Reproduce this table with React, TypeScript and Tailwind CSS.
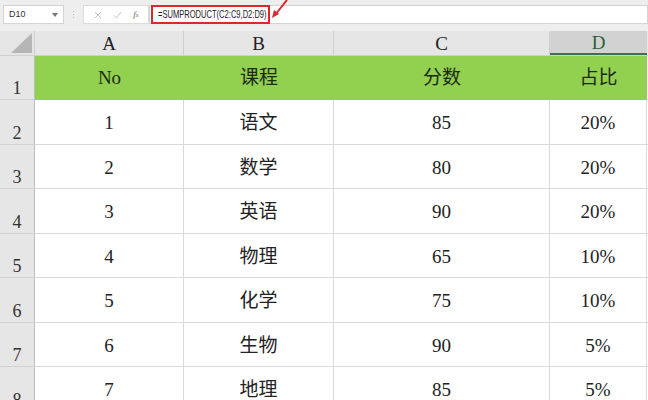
import React from "react";

const serif = { fontFamily: '"Liberation Serif", "Noto Sans CJK SC", serif' };
const sans = { fontFamily: '"Liberation Sans", Arial, sans-serif' };

const rows = [
  ["1", "语文", "85", "20%"],
  ["2", "数学", "80", "20%"],
  ["3", "英语", "90", "20%"],
  ["4", "物理", "65", "10%"],
  ["5", "化学", "75", "10%"],
  ["6", "生物", "90", "5%"],
  ["7", "地理", "85", "5%"],
];

const cols = "grid grid-cols-[35px_149px_150px_216px_97px_1fr]";

function RowHead({ n, h }: { n: string; h: string }) {
  return (
    <div
      className={`${h} bg-[#e6e6e6] border-r border-r-[#bdbdbd] border-b border-b-[#d2d2d2] flex items-end justify-center pb-[2px] text-[18px] leading-none text-[#333]`}
      style={serif}
    >
      {n}
    </div>
  );
}

export default function App() {
  return (
    <div className="w-[648px] h-[400px] overflow-hidden bg-white relative">
      {/* top formula bar */}
      <div className="h-[31px] bg-[#eeeeee] flex items-start pt-[5px] pl-[3px] gap-0">
        <div className="w-[61px] h-[19px] bg-white border border-[#d4d4d4] flex items-center justify-between px-[5px] text-[9px] text-[#333]" style={sans}>
          <span>D10</span>
          <svg width="6" height="4" viewBox="0 0 6 4"><path d="M0 0h6L3 4z" fill="#777" /></svg>
        </div>
        <div className="w-[19px] h-[19px] flex items-center justify-center">
          <div className="flex flex-col gap-[2px]">
            <div className="w-[1px] h-[1px] bg-[#bbb]" />
            <div className="w-[1px] h-[1px] bg-[#bbb]" />
            <div className="w-[1px] h-[1px] bg-[#bbb]" />
          </div>
        </div>
        <div className="w-[66px] h-[19px] bg-white border border-[#dcdcdc] flex items-center justify-around px-[4px]">
          <svg width="8" height="8" viewBox="0 0 8 8"><path d="M1 1l6 6M7 1L1 7" stroke="#c4c4c4" strokeWidth="1" /></svg>
          <svg width="9" height="8" viewBox="0 0 9 8"><path d="M1 4.5l2.5 2.5L8 1" stroke="#c4c4c4" strokeWidth="1" fill="none" /></svg>
          <span className="text-[9px] italic text-[#666]" style={{ fontFamily: '"Liberation Serif", serif' }}>f<span className="text-[6px]">x</span></span>
        </div>
        <div className="flex-1 h-[19px] bg-white border border-[#d4d4d4] relative">
          <div className="absolute left-[1px] top-[-1px] w-[119px] h-[19px] border-2 border-[#e0262b] flex items-center pl-[5px] overflow-hidden">
            <span className="inline-block whitespace-nowrap text-[10.5px] text-[#222] origin-left scale-x-[0.72]" style={sans}>
              =SUMPRODUCT(C2:C9,D2:D9)
            </span>
          </div>
        </div>
      </div>
      <svg className="absolute left-[271px] top-0" width="20" height="20" viewBox="0 0 20 20">
        <path d="M4 15L16 0" stroke="#e0262b" strokeWidth="2" fill="none" />
        <path d="M1 18L3 10L8 14Z" fill="#e0262b" />
      </svg>

      {/* column headers */}
      <div className={`${cols} h-[25px] bg-[#e6e6e6] border-b border-[#cfcfcf]`}>
        <div className="relative border-r border-[#cfcfcf]">
          <svg className="absolute right-[2px] bottom-[2px]" width="21" height="20" viewBox="0 0 21 20">
            <path d="M0 20H21V0Z" fill="#b6b6b6" />
          </svg>
        </div>
        {["A", "B", "C"].map((c) => (
          <div key={c} className="border-r border-[#cfcfcf] flex items-center justify-center text-[19px] leading-none text-[#222]" style={serif}>
            {c}
          </div>
        ))}
        <div className="bg-[#d2d2d2] border-b-2 border-[#3f6f4b] flex items-center justify-center text-[19px] leading-none text-[#2f5f3c]" style={serif}>
          D
        </div>
        <div />
      </div>

      {/* header data row */}
      <div className={`${cols}`}>
        <RowHead n="1" h="h-[44px]" />
        {["No", "课程", "分数", "占比"].map((t) => (
          <div key={t} className="h-[44px] bg-[#92d050] flex items-center justify-center text-[19px] text-[#1c2a12]" style={serif}>
            {t}
          </div>
        ))}
        <div className="h-[44px] border-b border-[#d9d9d9]" />
      </div>

      {rows.map((r, i) => (
        <div key={i} className={cols}>
          <RowHead n={String(i + 2)} h="h-[44.5px]" />
          {r.map((t, j) => (
            <div
              key={j}
              className="h-[44.5px] border-r border-b border-[#d9d9d9] flex items-center justify-center pt-[3px] text-[19px] text-[#222]"
              style={serif}
            >
              {t}
            </div>
          ))}
          <div className="h-[44.5px] border-b border-[#d9d9d9]" />
        </div>
      ))}
    </div>
  );
}
